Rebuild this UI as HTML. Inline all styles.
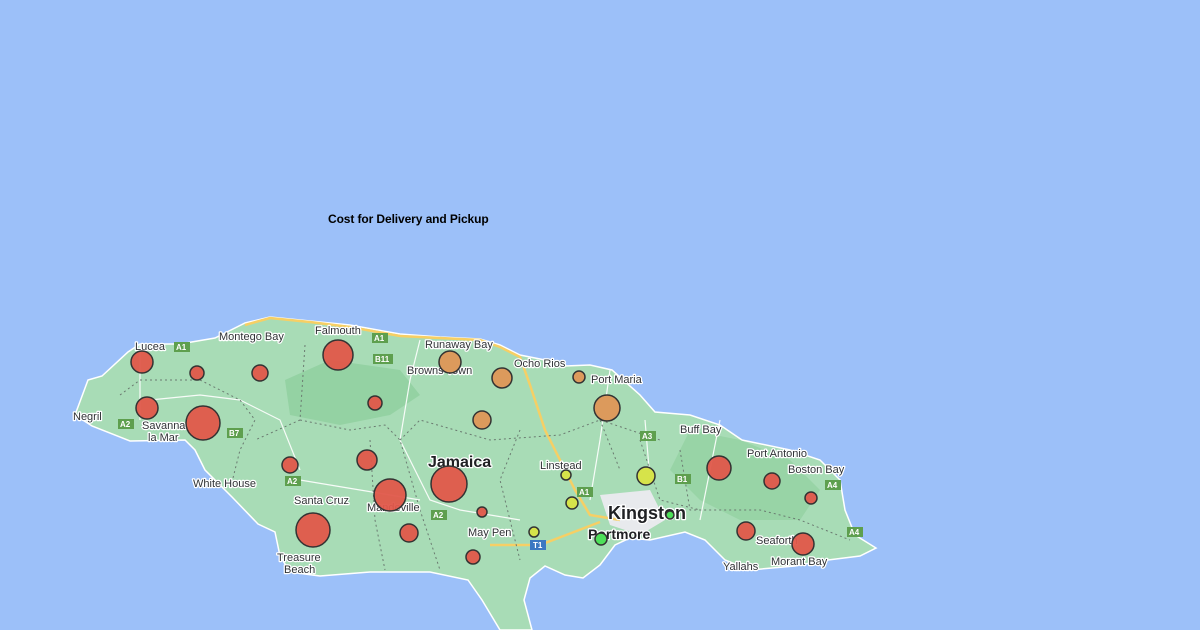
<!DOCTYPE html>
<html><head><style>
html,body{margin:0;padding:0;width:1200px;height:630px;overflow:hidden;background:#9cc0f9;font-family:"Liberation Sans",sans-serif}
svg{position:absolute;left:0;top:0}
text{font-family:"Liberation Sans",sans-serif;fill:#303336;font-size:11px;paint-order:stroke;stroke:#fff;stroke-width:2.5px;stroke-linejoin:round}
.t{position:absolute;left:328px;top:212px;font-size:12px;font-weight:bold;color:#000;letter-spacing:-0.1px}
</style></head><body>
<svg width="1200" height="630" viewBox="0 0 1200 630">
<path d="M75,415 L88,380 L102,376 L128,352 L140,344 L180,344 L215,338 L245,323 L270,317 L310,321 L350,325 L400,334 L440,337 L480,339 L500,345 L520,355 L545,360 L565,366 L590,365 L612,370 L640,395 L655,412 L690,415 L720,425 L742,440 L790,450 L820,460 L840,480 L845,510 L855,535 L876,548 L860,556 L820,561 L795,566 L750,570 L725,560 L705,540 L685,532 L650,540 L630,538 L615,545 L600,565 L583,578 L565,575 L545,566 L530,578 L524,600 L532,630 L500,630 L482,600 L468,580 L430,572 L370,572 L320,576 L290,572 L280,556 L275,532 L258,524 L232,497 L205,470 L195,450 L185,440 L130,441 L92,426 Z" fill="#a8dcb6" stroke="#fff" stroke-width="1.5"/>
<path d="M285,380 L330,360 L400,370 L420,395 L390,415 L340,425 L290,415 Z" fill="#94d2a3"/>
<path d="M690,430 L740,440 L790,460 L820,490 L800,520 L740,520 L700,500 L670,470 Z" fill="#94d2a3" opacity=".8"/>
<path d="M600,495 L650,490 L665,520 L640,535 L610,525 Z" fill="#e8eaed"/>
<path d="M245,325 L270,318 L310,322 L350,327 L400,336 L440,338 L480,340 L500,347 L520,357 L530,385 L545,430 L560,460 L575,490 L590,515 L620,520 M490,545 L540,545 L600,522" fill="none" stroke="#f6cf65" stroke-width="2.5"/>
<g fill="none" stroke="#fff" stroke-width="1.2" opacity=".9">
<path d="M140,345 L140,420 M150,400 L200,395 L240,400 L280,420 L300,470 M420,340 L410,380 L400,440 L430,500 L460,510 L520,520 M300,480 L360,490 L420,500 M610,370 L600,440 L590,500 M645,420 L650,480 M720,420 L700,520"/>
</g>
<g fill="none" stroke="#6a7a70" stroke-width="1" stroke-dasharray="2,3">
<path d="M120,395 L140,380 L200,380 L240,400 L255,420 L240,450 L230,490 M305,345 L300,420 L255,440 M300,420 L350,430 L385,425 L400,440 L420,510 L440,570 M400,440 L420,420 L490,440 L560,435 L600,420 L660,440 M370,440 L375,520 L385,570 M520,430 L500,480 L520,560 M600,420 L620,470 M640,440 L660,500 L700,510 M680,450 L690,510 L760,510 L800,520 L850,540"/>
</g>
<g font-size="8" font-weight="bold">
<rect x="174" y="342" width="16" height="10" fill="#5e9f4e"/><text x="176" y="350" style="fill:#fff;stroke:none;font-size:8px">A1</text>
<rect x="372" y="333" width="16" height="10" fill="#5e9f4e"/><text x="374" y="341" style="fill:#fff;stroke:none;font-size:8px">A1</text>
<rect x="373" y="354" width="20" height="10" fill="#5e9f4e"/><text x="375" y="362" style="fill:#fff;stroke:none;font-size:8px">B11</text>
<rect x="118" y="419" width="16" height="10" fill="#5e9f4e"/><text x="120" y="427" style="fill:#fff;stroke:none;font-size:8px">A2</text>
<rect x="227" y="428" width="16" height="10" fill="#5e9f4e"/><text x="229" y="436" style="fill:#fff;stroke:none;font-size:8px">B7</text>
<rect x="285" y="476" width="16" height="10" fill="#5e9f4e"/><text x="287" y="484" style="fill:#fff;stroke:none;font-size:8px">A2</text>
<rect x="431" y="510" width="16" height="10" fill="#5e9f4e"/><text x="433" y="518" style="fill:#fff;stroke:none;font-size:8px">A2</text>
<rect x="640" y="431" width="16" height="10" fill="#5e9f4e"/><text x="642" y="439" style="fill:#fff;stroke:none;font-size:8px">A3</text>
<rect x="577" y="487" width="16" height="10" fill="#5e9f4e"/><text x="579" y="495" style="fill:#fff;stroke:none;font-size:8px">A1</text>
<rect x="675" y="474" width="16" height="10" fill="#5e9f4e"/><text x="677" y="482" style="fill:#fff;stroke:none;font-size:8px">B1</text>
<rect x="825" y="480" width="16" height="10" fill="#5e9f4e"/><text x="827" y="488" style="fill:#fff;stroke:none;font-size:8px">A4</text>
<rect x="847" y="527" width="16" height="10" fill="#5e9f4e"/><text x="849" y="535" style="fill:#fff;stroke:none;font-size:8px">A4</text>
<rect x="530" y="540" width="16" height="10" fill="#3b78c2"/><text x="533" y="548" style="fill:#fff;stroke:none;font-size:8px">T1</text>
</g>
<text x="135" y="350">Lucea</text>
<text x="219" y="340">Montego Bay</text>
<text x="315" y="334">Falmouth</text>
<text x="425" y="348">Runaway Bay</text>
<text x="407" y="374">Browns Town</text>
<text x="514" y="367">Ocho Rios</text>
<text x="591" y="383">Port Maria</text>
<text x="680" y="433">Buff Bay</text>
<text x="747" y="457">Port Antonio</text>
<text x="788" y="473">Boston Bay</text>
<text x="73" y="420">Negril</text>
<text x="142" y="429">Savanna</text>
<text x="148" y="441">la Mar</text>
<text x="193" y="487">White House</text>
<text x="294" y="504">Santa Cruz</text>
<text x="367" y="511">Mandeville</text>
<text x="277" y="561">Treasure</text>
<text x="284" y="573">Beach</text>
<text x="468" y="536">May Pen</text>
<text x="540" y="469">Linstead</text>
<text x="756" y="544">Seaforth</text>
<text x="771" y="565">Morant Bay</text>
<text x="723" y="570">Yallahs</text>
<text x="428" y="467" style="font-size:16px;font-weight:bold;fill:#202124">Jamaica</text>
<text x="608" y="519" style="font-size:18px;font-weight:bold;fill:#202124">Kingston</text>
<text x="588" y="539" style="font-size:14px;font-weight:bold;fill:#202124">Portmore</text>
<g stroke="#333" stroke-width="1.5">
<g fill="#e0574a" fill-opacity=".95">
<circle cx="142" cy="362" r="11"/><circle cx="197" cy="373" r="7"/><circle cx="260" cy="373" r="8"/><circle cx="338" cy="355" r="15"/>
<circle cx="147" cy="408" r="11"/><circle cx="203" cy="423" r="17"/><circle cx="375" cy="403" r="7"/>
<circle cx="290" cy="465" r="8"/><circle cx="367" cy="460" r="10"/><circle cx="390" cy="495" r="16"/><circle cx="449" cy="484" r="18"/>
<circle cx="313" cy="530" r="17"/><circle cx="409" cy="533" r="9"/><circle cx="482" cy="512" r="5"/><circle cx="473" cy="557" r="7"/>
<circle cx="719" cy="468" r="12"/><circle cx="772" cy="481" r="8"/><circle cx="811" cy="498" r="6"/><circle cx="746" cy="531" r="9"/><circle cx="803" cy="544" r="11"/>
</g>
<g fill="#dc9a5c"><circle cx="450" cy="362" r="11"/><circle cx="502" cy="378" r="10"/><circle cx="579" cy="377" r="6"/><circle cx="607" cy="408" r="13"/><circle cx="482" cy="420" r="9"/></g>
<g fill="#d6e34a"><circle cx="566" cy="475" r="5"/><circle cx="646" cy="476" r="9"/><circle cx="572" cy="503" r="6"/><circle cx="534" cy="532" r="5"/></g>
<g fill="#4ee05a"><circle cx="601" cy="539" r="6"/><circle cx="670" cy="515" r="4"/></g>
</g>
</svg>
<div class="t">Cost for Delivery and Pickup</div>
</body></html>
